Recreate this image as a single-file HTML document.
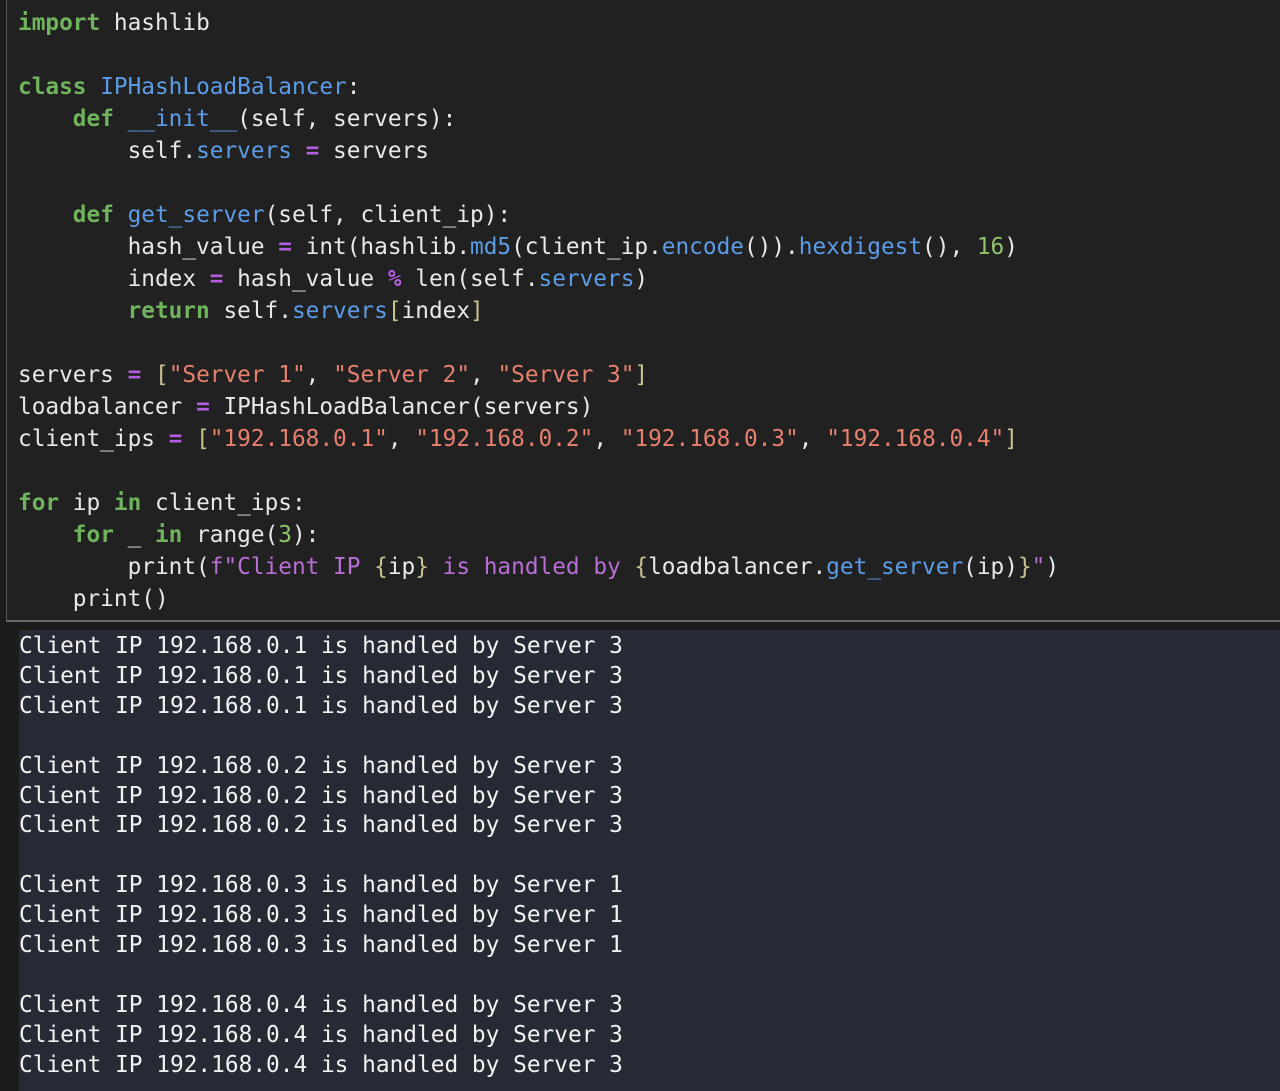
<!DOCTYPE html>
<html><head><meta charset="utf-8"><style>
html,body{margin:0;padding:0;background:#1c1c1c;width:1280px;height:1091px;overflow:hidden}
.code{position:absolute;left:6px;top:0;width:1274px;height:622px;background:#212121;border-left:1px solid #555;border-bottom:2px solid #666;box-sizing:border-box}
pre{margin:0;font-family:"DejaVu Sans Mono","Liberation Mono",monospace;white-space:pre}
.code pre{position:absolute;left:11px;top:7px;font-size:22.76px;line-height:32px;color:#e8e8e8}
.out{position:absolute;left:19px;top:630px;width:1261px;height:461px;background:#262a35}
.out pre{position:absolute;left:0;top:2px;font-size:22.8px;line-height:29.9px;color:#f2f2f2}
.k{color:#6fb35c;font-weight:bold}.b{color:#5c9ce6}.p{color:#b35ee0;font-weight:bold}.s{color:#e8806e}.n{color:#8fc46a}.y{color:#c8c391}.f{color:#b96ed6}
</style></head><body>
<div class="code"><pre><span class="k">import</span> hashlib

<span class="k">class</span> <span class="b">IPHashLoadBalancer</span>:
    <span class="k">def</span> <span class="b">__init__</span>(self, servers):
        self.<span class="b">servers</span> <span class="p">=</span> servers

    <span class="k">def</span> <span class="b">get_server</span>(self, client_ip):
        hash_value <span class="p">=</span> int(hashlib.<span class="b">md5</span>(client_ip.<span class="b">encode</span>()).<span class="b">hexdigest</span>(), <span class="n">16</span>)
        index <span class="p">=</span> hash_value <span class="p">%</span> len(self.<span class="b">servers</span>)
        <span class="k">return</span> self.<span class="b">servers</span><span class="y">[</span>index<span class="y">]</span>

servers <span class="p">=</span> <span class="y">[</span><span class="s">"Server 1"</span>, <span class="s">"Server 2"</span>, <span class="s">"Server 3"</span><span class="y">]</span>
loadbalancer <span class="p">=</span> IPHashLoadBalancer(servers)
client_ips <span class="p">=</span> <span class="y">[</span><span class="s">"192.168.0.1"</span>, <span class="s">"192.168.0.2"</span>, <span class="s">"192.168.0.3"</span>, <span class="s">"192.168.0.4"</span><span class="y">]</span>

<span class="k">for</span> ip <span class="k">in</span> client_ips:
    <span class="k">for</span> _ <span class="k">in</span> range(<span class="n">3</span>):
        print(<span class="f">f"Client IP </span><span class="y">{</span>ip<span class="y">}</span><span class="f"> is handled by </span><span class="y">{</span>loadbalancer.<span class="b">get_server</span>(ip)<span class="y">}</span><span class="f">"</span>)
    print()</pre></div>
<div class="out"><pre>Client IP 192.168.0.1 is handled by Server 3
Client IP 192.168.0.1 is handled by Server 3
Client IP 192.168.0.1 is handled by Server 3

Client IP 192.168.0.2 is handled by Server 3
Client IP 192.168.0.2 is handled by Server 3
Client IP 192.168.0.2 is handled by Server 3

Client IP 192.168.0.3 is handled by Server 1
Client IP 192.168.0.3 is handled by Server 1
Client IP 192.168.0.3 is handled by Server 1

Client IP 192.168.0.4 is handled by Server 3
Client IP 192.168.0.4 is handled by Server 3
Client IP 192.168.0.4 is handled by Server 3</pre></div>
</body></html>
